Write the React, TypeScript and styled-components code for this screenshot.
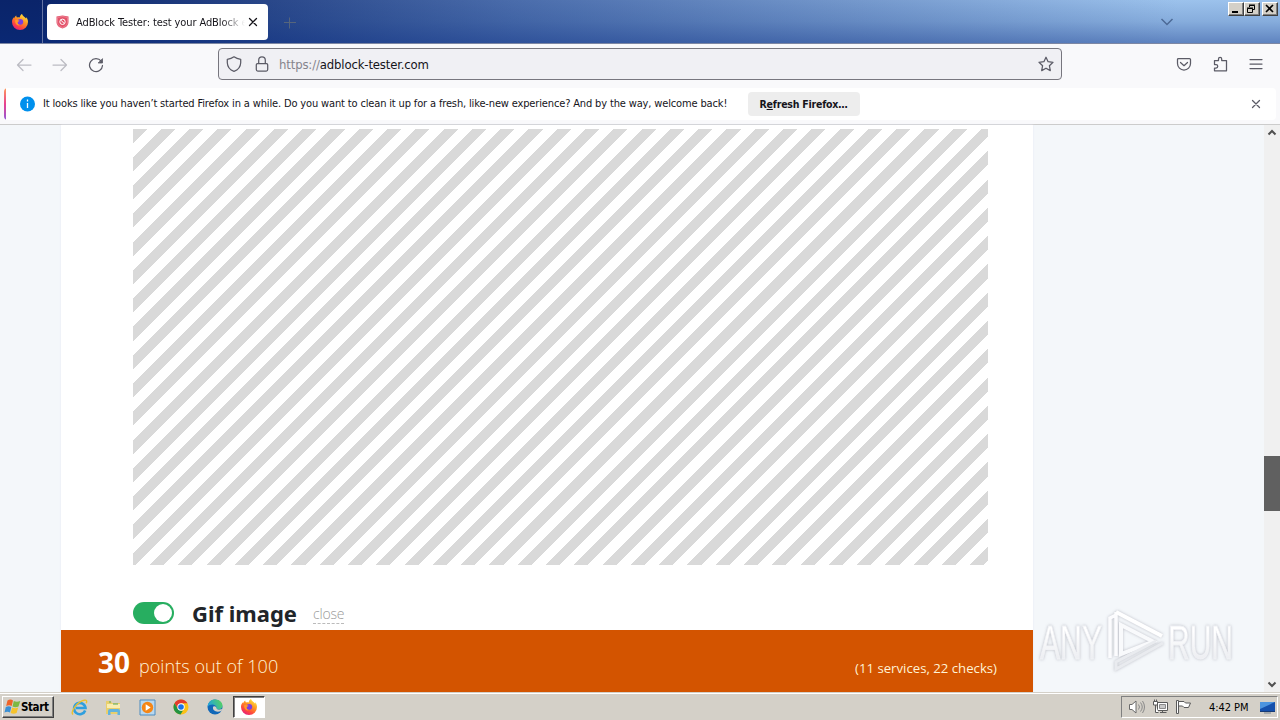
import type { ReactNode } from 'react';
import styled, { createGlobalStyle } from 'styled-components';

const GlobalStyle = createGlobalStyle`
    * {
        box-sizing: border-box;
    }

    body {
        margin: 0;
        overflow: hidden;
        font-family: 'DejaVu Sans Condensed', 'DejaVu Sans', sans-serif;
        font-size: 11px;
        color: #15141a;
    }

    svg {
        display: block;
        flex: none;
    }
`;

const Desktop = styled.div`
    width: 1280px;
    height: 720px;
    display: flex;
    flex-direction: column;
    overflow: hidden;
`;

/* title bar */

const TitleBar = styled.header`
    height: 44px;
    flex: none;
    display: flex;
    border-bottom: 1px solid #7d87a3;
    background: linear-gradient(
            180deg,
            rgba(10, 50, 130, 0) 0%,
            rgba(10, 50, 130, 0.15) 50%,
            rgba(10, 45, 130, 0.42) 100%
        ),
        linear-gradient(90deg, #0a246a 0%, #0a246a 3%, #4a6cab 40%, #9cc2ec 92%, #9cc2ec 100%);
`;

const FirefoxView = styled.div`
    width: 43px;
    display: flex;
    align-items: center;
    justify-content: center;
    border-right: 1px solid #6474a4;
    padding-right: 3px;
`;

const Tab = styled.div`
    width: 221px;
    height: 36px;
    margin: 4px 0 0 4px;
    padding: 0 8px 0 9px;
    display: flex;
    align-items: center;
    border-radius: 4px;
    background: #fff;
`;

const TabTitle = styled.span`
    width: 169px;
    margin-left: 7px;
    padding-top: 1px;
    white-space: nowrap;
    letter-spacing: -0.1px;
    mask-image: linear-gradient(90deg, #000 145px, transparent 169px);
`;

const NewTab = styled.div`
    margin: 17px 0 0 16px;
`;

const AllTabs = styled.div`
    margin: 15px 54px 0 auto;
`;

const WindowButtons = styled.div`
    display: flex;
    padding: 2px 2px 0 0;
`;

const WindowButton = styled.div<{ $gap?: boolean }>`
    width: 16px;
    height: 14px;
    margin-left: ${({ $gap }) => ($gap ? '2px' : '0')};
    background: #d4d0c8;
    border: 1px solid;
    border-color: #fff #404040 #404040 #fff;
    box-shadow: inset -1px -1px 0 #808080;
`;

/* toolbar */

const NavBar = styled.nav`
    height: 44px;
    flex: none;
    display: flex;
    align-items: center;
    padding: 0 16px;
    background: #f9f9fb;
    color: #5b5b66;
`;

const NavIcons = styled.div`
    display: flex;
    gap: 20px;
    width: 202px;
    padding-bottom: 2px;
`;

const UrlBar = styled.div`
    width: 844px;
    height: 32px;
    margin-top: -4px;
    display: flex;
    align-items: center;
    padding: 0 7px;
    border: 1px solid #77767e;
    border-radius: 4px;
    background: #f0f0f4;
`;

const UrlIcons = styled.div`
    display: flex;
    gap: 12px;
`;

const UrlText = styled.span`
    flex: 1;
    margin-left: 9px;
    font-size: 13px;
    letter-spacing: -0.15px;
    color: #15141a;

    span {
        color: #85848c;
    }
`;

const ToolIcons = styled.div`
    display: flex;
    gap: 20px;
    margin-left: auto;
    padding-bottom: 4px;
`;

/* notification */

const Notification = styled.div`
    height: 37px;
    flex: none;
    padding-left: 4px;
    background: #f9f9fb;
    border-bottom: 1px solid #cccccc;
`;

const NotificationBody = styled.div`
    position: relative;
    width: 1272px;
    height: 32px;
    display: flex;
    align-items: center;
    padding: 0 12px 0 15px;
    border-radius: 4px;
    background: #fff;
    overflow: hidden;

    &::before {
        content: '';
        position: absolute;
        left: 0;
        top: 0;
        bottom: 0;
        width: 2px;
        background: linear-gradient(#ff9a5a, #e8408f 50%, #9059d8);
    }
`;

const Message = styled.span`
    width: 697px;
    margin-left: 8px;
    padding-bottom: 1px;
    white-space: nowrap;
    letter-spacing: -0.147px;
`;

const RefreshButton = styled.div`
    width: 112px;
    height: 24px;
    margin-left: 8px;
    padding-right: 1px;
    line-height: 24px;
    text-align: center;
    font-weight: bold;
    font-size: 10.5px;
    letter-spacing: -0.22px;
    background: #ededed;
    border-radius: 4px;
    white-space: nowrap;
`;

const Dismiss = styled.div`
    margin-left: auto;
`;

/* page */

const Viewport = styled.main`
    flex: 1;
    min-height: 0;
    display: flex;
    background: #f4f7fa;
`;

const Content = styled.div`
    width: 972px;
    margin-left: 61px;
    display: flex;
    flex-direction: column;
    background: #fff;
    box-shadow: 0 0 2px #e6e9f5;
`;

const AdPlaceholder = styled.div`
    width: 855px;
    height: 436px;
    margin: 4px 0 0 72px;
    background: repeating-linear-gradient(135deg, #d9d9d9 0 10px, #fff 10px 20px);
`;

const TestRow = styled.div`
    flex: 1;
    display: flex;
    padding: 32px 0 0 72px;
`;

const Toggle = styled.div`
    width: 41px;
    height: 22px;
    margin-top: 5px;
    padding: 2px;
    display: flex;
    justify-content: flex-end;
    border-radius: 11px;
    background: #27ae60;

    &::after {
        content: '';
        width: 18px;
        height: 18px;
        border-radius: 50%;
        background: #fff;
    }
`;

const TestTitle = styled.h3`
    width: 105px;
    margin: 0 0 0 18px;
    font: bold 22px/32px 'Noto Sans', sans-serif;
    white-space: nowrap;
    color: #212529;
`;

const CloseLink = styled.span`
    height: 19px;
    margin: 8px 0 0 16px;
    font: 300 14px/18px 'Open Sans', sans-serif;
    letter-spacing: -0.2px;
    color: #999;
    border-bottom: 1px dashed #bbb;
`;

const ScoreBar = styled.div`
    height: 62px;
    flex: none;
    display: flex;
    align-items: baseline;
    padding: 11px 36px 0 37px;
    background: #d35400;
    color: #fff3d6;
    font-family: 'Open Sans', sans-serif;
    white-space: nowrap;
`;

const Score = styled.strong`
    width: 41px;
    font: bold 28px/42px 'Noto Sans', sans-serif;
    color: #fff;
`;

const ScoreLabel = styled.span`
    font-size: 18px;
    font-weight: 300;
    letter-spacing: 0.05px;
`;

const ScoreDetail = styled.span`
    margin-left: auto;
    font-size: 13.2px;
`;

const Margin = styled.aside`
    position: relative;
    flex: 1;
`;

const Watermark = styled.svg`
    position: absolute;
    left: 0;
    top: 475px;
    font-family: 'Liberation Sans', sans-serif;
    font-size: 49px;
    filter: drop-shadow(0 0 1.5px rgba(60, 60, 80, 0.3));
`;

const ScrollBar = styled.div`
    width: 16px;
    display: flex;
    flex-direction: column;
    background: #f0f0f0;
`;

const ScrollThumb = styled.div`
    height: 55px;
    margin: 316px 0 auto;
    background: #606060;
`;

/* taskbar */

const TaskBar = styled.footer`
    height: 28px;
    flex: none;
    display: flex;
    align-items: center;
    padding: 1px 2px 0 2px;
    border-top: 1px solid #d4d0c8;
    box-shadow: inset 0 1px 0 #fff;
    background: #d4d0c8;
`;

const StartButton = styled.div`
    width: 52px;
    height: 22px;
    display: flex;
    align-items: center;
    padding-left: 1px;
    border: 1px solid;
    border-color: #fff #404040 #404040 #fff;
    box-shadow: inset -1px -1px 0 #808080;
    font-weight: bold;
    font-size: 11.5px;
    letter-spacing: -0.4px;
    color: #000;
`;

const QuickLaunch = styled.div`
    display: flex;
    margin-left: 8px;
`;

const LaunchItem = styled.div<{ $active?: boolean }>`
    width: ${({ $active }) => ($active ? '32px' : '34px')};
    height: 22px;
    margin-left: ${({ $active }) => ($active ? '1px' : '0')};
    display: flex;
    align-items: center;
    justify-content: center;
    border: 1px solid;
    border-color: ${({ $active }) =>
        $active ? '#404040 #fff #fff #404040' : 'transparent'};
    background: ${({ $active }) => ($active ? '#fff' : 'none')};
    box-shadow: ${({ $active }) =>
        $active ? 'inset 1px 1px 0 #808080' : 'none'};
`;

const Tray = styled.div`
    width: 157px;
    height: 22px;
    margin-left: auto;
    display: flex;
    align-items: center;
    padding-left: 6px;
    border: 1px solid;
    border-color: #808080 #fff #fff #808080;
    color: #000;
`;

const TrayIcons = styled.div`
    display: flex;
    gap: 6px;
`;

const Clock = styled.span`
    width: 40px;
    margin: 0 10px 0 17px;
    white-space: nowrap;
    letter-spacing: -0.05px;
`;

type IconProps = { size?: number; color?: string; children: ReactNode };

const Icon = ({ size = 16, color = '#5b5b66', children }: IconProps) => (
    <svg
        width={size}
        height={size}
        viewBox="0 0 16 16"
        fill="none"
        stroke={color}
        strokeWidth="1.25"
        strokeLinecap="round"
        strokeLinejoin="round"
    >
        {children}
    </svg>
);

const FirefoxLogo = () => (
    <svg width="16" height="16" viewBox="0 0 16 16">
        <defs>
            <linearGradient id="fox" x1="0.8" y1="0" x2="0.2" y2="1">
                <stop offset="0" stopColor="#fff044" />
                <stop offset="0.4" stopColor="#ff9421" />
                <stop offset="0.7" stopColor="#ff4b3b" />
                <stop offset="1" stopColor="#e31587" />
            </linearGradient>
        </defs>
        <path
            fill="url(#fox)"
            d="M10 0c.3 2 3.200 3 4 4.600.5-.2.300-1.100.2-1.600C15.500 4.500 16 6.300 16 8a8 8 0 0 1-16 0c0-2 .8-3.600 1.800-4.700L2 4.500C2.500 3 3.400 2 4.200 1.500c0 .8.300 1.500.8 2C6 3.300 7 3.300 7.800 3.600 7.700 2 8.800.6 10 0z"
        />
        <circle cx="8.300" cy="7.800" r="2.900" fill="#7a3fe0" />
        <path fill="#ff9a2a" d="M3 6.500c1.500-.8 3-.6 4.500.3C7 7.600 6 7.600 5.600 8.300c-.3 1.500.9 2.500 2.400 2.700-2.500 1.500-5-.8-5-4.500z" />
    </svg>
);

const AdBlockIcon = () => (
    <svg width="13" height="14" viewBox="0 0 13 14">
        <path fill="#e4526a" d="M6.500.5 12.500 1.500v5.500c0 3.500-2.500 5.500-6 6.500C3 12.500.500 10.500.500 7V1.500z" />
        <path d="M6.500 1.500 11.500 2.500v4.500c0 3-2 4.500-5 5.500-3-1-5-2.500-5-5.500V2.500z" fill="none" stroke="#f09aa8" strokeWidth=".6" />
        <circle cx="6.500" cy="6.800" r="2.700" fill="none" stroke="#fff" strokeWidth="1" />
        <path d="m4.700 5 3.600 3.600" stroke="#fff" />
    </svg>
);

const ExplorerIcon = () => (
    <svg width="17" height="17" viewBox="0 0 17 17" fill="none">
        <path d="M14.200 11.500A5.700 5.700 0 1 1 14.500 9H5" stroke="#2f9fde" strokeWidth="2.600" />
        <path d="M2 15.500C-1 13 6 3 13 1.300c3-.8 3 1.200 2.200 3" stroke="#ecc02c" strokeWidth="1.400" />
    </svg>
);

const FolderIcon = () => (
    <svg width="17" height="17" viewBox="0 0 17 17">
        <path d="M1 2h5l1 2h8v11H1z" fill="#e9cf6c" />
        <path d="M2 5h13v4H2z" fill="#f9edb0" />
        <path d="M3 16v-4q0-2 2-2h8q2 0 2 2v4h-2.500v-3h-7v3z" fill="#62b3dd" />
        <path d="M4 3h2M8 5h5" stroke="#54a864" />
    </svg>
);

const MediaIcon = () => (
    <svg width="17" height="17" viewBox="0 0 17 17">
        <path d="M1 1h15v15H1z" fill="#b9d8ef" stroke="#4d8cc0" />
        <circle cx="8.500" cy="8.500" r="5.700" fill="#f58616" />
        <path d="m6.700 5.300 5 3.200-5 3.200z" fill="#fff" />
    </svg>
);

const ChromeIcon = () => (
    <svg width="16" height="16" viewBox="0 0 16 16">
        <circle cx="8" cy="8" r="7.500" fill="#fbc116" />
        <path d="M1.500 4.200A7.500 7.500 0 0 1 14.500 4.300H8L4.800 9.800z" fill="#e33b2e" />
        <path d="M1.500 4.200 4.800 9.800 8 11.500h2L7.500 15.500A7.500 7.500 0 0 1 1.500 4.200z" fill="#229342" />
        <circle cx="8" cy="8" r="3.700" fill="#fff" />
        <circle cx="8" cy="8" r="2.800" fill="#1a73e8" />
    </svg>
);

const EdgeIcon = () => (
    <svg width="16" height="16" viewBox="0 0 16 16">
        <defs>
            <linearGradient id="edge" x1="0" y1="0.500" x2="1" y2="0.200">
                <stop offset="0" stopColor="#1fa2e0" />
                <stop offset="1" stopColor="#57d35d" />
            </linearGradient>
        </defs>
        <circle cx="8" cy="8" r="7.500" fill="#1268b8" />
        <path d="M.5 8C1 3 4 .5 8 .5c4.500 0 7.500 3 7.500 6.300 0 2.700-2.500 4-5 3.700-1.500-.2-1.500-1-1-1.700C9.700 5.500 3.500 4 .5 8z" fill="url(#edge)" />
        <path d="M6 8.300c-.5 3 3 5.700 8.300 3.700l1.700-2-2 .3c-2 .8-4.500.3-4.500-1 0-2-3-3-3.500-1z" fill="#d4d0c8" />
    </svg>
);

const StartFlag = () => (
    <svg width="17" height="16" viewBox="0 0 17 16">
        <path d="M3.500 1.500q3-1.800 5.500 0L7.700 7q-2.500-1.500-5.500 0z" fill="#ef6327" />
        <path d="M9.800 2q3 1.500 6.500 0L14.500 7.500q-3 1.500-6 0z" fill="#7db843" />
        <path d="M1.800 8q3-1.500 5.500 0l-1.300 5.500q-2.500-1.500-5.500 0z" fill="#3a8fd4" />
        <path d="M8.200 8.500q3 1.500 6 0l-1.600 5.500q-3 1.500-6 0z" fill="#f6c32c" />
    </svg>
);

const VolumeIcon = () => (
    <svg width="18" height="16" viewBox="0 0 18 16" fill="none" stroke="#6a6a6a">
        <path d="M1.500 5.500h2.500l4-3.500v12l-4-3.500H1.500z" fill="#fff" />
        <path d="M10.500 5.500q2 2.500 0 5M12.500 3.500q3.500 4.500 0 9M14.500 2q4 6 0 12" stroke="#8a8a8a" />
    </svg>
);

const NetworkIcon = () => (
    <svg width="17" height="16" viewBox="0 0 17 16" fill="#fff" stroke="#5a5a5a">
        <path d="M5.500 3.500h10v8h-10zM8 13.500h6.500M10.500 11.500v2" />
        <path d="M7.500 5.500h6v4h-6z" fill="#c8c8c8" stroke="#8a8a8a" />
        <path d="M1.500 2.500h4v3.500h-4zM2.500.5v2M4.500.5v2M3.500 6v7.500h3" />
    </svg>
);

const FlagIcon = () => (
    <svg width="17" height="16" viewBox="0 0 17 16" fill="#fff" stroke="#5a5a5a">
        <path d="M1.500 1.500h2v13h-2z" />
        <path d="M3.500 2.500h5.500l1.500 1.500h5l-2 4.500H9L7.500 7h-4z" />
    </svg>
);

const DesktopIcon = () => (
    <svg width="17" height="16" viewBox="0 0 17 16">
        <path d="M1 3h15v10H1z" fill="#1550ac" />
        <path d="M1 3h15L1 10z" fill="#4c94df" />
        <path d="M1 12.500h15" stroke="#173b75" />
        <path d="M5 14h7" stroke="#78838f" />
    </svg>
);

const launchers = [
    { name: 'ie', icon: <ExplorerIcon /> },
    { name: 'files', icon: <FolderIcon /> },
    { name: 'media', icon: <MediaIcon /> },
    { name: 'chrome', icon: <ChromeIcon /> },
    { name: 'edge', icon: <EdgeIcon /> },
    { name: 'firefox', icon: <FirefoxLogo />, active: true },
];

const Chevron = ({ up }: { up?: boolean }) => (
    <svg width="16" height="15" viewBox="0 0 16 15" fill="none" stroke="#505050" strokeWidth="2">
        <path d={up ? 'm4.500 9.500 3.500-3.500 3.500 3.500' : 'm4.500 5.500 3.500 3.500 3.500-3.500'} />
    </svg>
);

const AnyRun = () => (
    <Watermark width="230" height="80" viewBox="0 0 230 80">
        <defs>
            <linearGradient id="mark" x1="0" y1="0" x2="0" y2="1">
                <stop offset="0.3" stopColor="#ffffff" />
                <stop offset="1" stopColor="#e6e8ed" />
            </linearGradient>
        </defs>
        <g fill="url(#mark)" stroke="#f1f2f6" strokeWidth="0.8">
            <text x="7" y="59" textLength="62" lengthAdjust="spacingAndGlyphs">
                ANY
            </text>
            <text x="135" y="59" textLength="65" lengthAdjust="spacingAndGlyphs">
                RUN
            </text>
        </g>
        <g fill="none" strokeWidth="4">
            <path d="M88 54V25l32 16.500z" stroke="#f9fafc" />
            <path d="M83 12v44M77 58V18l6-3" stroke="#fcfcfe" strokeWidth="3.500" />
            <path d="m83 12 46 24" stroke="#fff" />
            <path d="m130 43-47 26v-7l40-21" stroke="#e9ebef" strokeWidth="3" />
        </g>
    </Watermark>
);

const App = () => {
    return (
        <Desktop>
            <GlobalStyle />
            <TitleBar>
                <FirefoxView>
                    <FirefoxLogo />
                </FirefoxView>
                <Tab>
                    <AdBlockIcon />
                    <TabTitle>AdBlock Tester: test your AdBlock e</TabTitle>
                    <Icon color="#15141a">
                        <path d="m4.500 4.500 7 7M11.500 4.500l-7 7" />
                    </Icon>
                </Tab>
                <NewTab>
                    <svg width="12" height="12" viewBox="0 0 12 12" stroke="#56657c">
                        <path d="M5.500 .5v11M0 5.500h12" />
                    </svg>
                </NewTab>
                <AllTabs>
                    <svg width="14" height="14" viewBox="0 0 14 14" fill="none" stroke="#4d6a96" strokeWidth="1.500">
                        <path d="m1.500 4 5.500 5.500L12.500 4" />
                    </svg>
                </AllTabs>
                <WindowButtons>
                    <WindowButton>
                        <svg width="14" height="12" viewBox="0 0 14 12">
                            <path d="M3 8h6v2H3z" />
                        </svg>
                    </WindowButton>
                    <WindowButton>
                        <svg width="14" height="12" viewBox="0 0 14 12" fill="none" stroke="#000">
                            <path d="M4.500 4V2.500h5v4H8M4 2h6M2.500 5.500h5v4h-5zM2 5h6" />
                        </svg>
                    </WindowButton>
                    <WindowButton $gap>
                        <svg width="14" height="12" viewBox="0 0 14 12" stroke="#000" strokeWidth="1.600">
                            <path d="m3 2 7 7M10 2 3 9" />
                        </svg>
                    </WindowButton>
                </WindowButtons>
            </TitleBar>

            <NavBar>
                <NavIcons>
                    <Icon color="#bcbcc3">
                        <path d="M15 8H1.500M7 2.500 1.500 8 7 13.500" />
                    </Icon>
                    <Icon color="#bcbcc3">
                        <path d="M1 8h13.500M9 2.500 14.500 8 9 13.500" />
                    </Icon>
                    <Icon>
                        <path d="M13.200 4.200A6.500 6.500 0 1 0 14.500 8.500" />
                        <path d="M14.500 2v4h-4z" fill="#5b5b66" strokeWidth=".8" />
                    </Icon>
                </NavIcons>
                <UrlBar>
                    <UrlIcons>
                        <Icon>
                            <path d="M8 .8C6 2.300 4 3 1.300 3.300v3.500C1.500 11 4 14 8 15.300c4-1.300 6.500-4.300 6.700-8.500V3.300C12 3 10 2.300 8 .8z" />
                        </Icon>
                        <Icon>
                            <path d="M3.500 7.500h9a1.200 1.200 0 0 1 1.200 1.200v4.800a1.500 1.500 0 0 1-1.500 1.500H3.800a1.500 1.500 0 0 1-1.500-1.500V8.700a1.200 1.200 0 0 1 1.200-1.200zM4.700 7.500V4.200a3.300 3.300 0 0 1 6.600 0v3.300" />
                        </Icon>
                    </UrlIcons>
                    <UrlText>
                        <span>https://</span>adblock-tester.com
                    </UrlText>
                    <Icon>
                        <path d="m8 1.200 2.100 4.500 4.900.6-3.600 3.400.9 4.900L8 12.200l-4.300 2.400.9-4.900L1 6.300l4.900-.6z" />
                    </Icon>
                </UrlBar>
                <ToolIcons>
                    <Icon>
                        <path d="M2.500 2.500h11a1 1 0 0 1 1 1v4a6.500 6.500 0 0 1-13 0v-4a1 1 0 0 1 1-1zM4.500 6.500 8 9.700l3.500-3.200" />
                    </Icon>
                    <Icon>
                        <path d="M2.500 7V4.500H6.500V3a1.600 1.600 0 0 1 3.200 0v1.500h4.800v10.300h-12V12H4a1.700 1.700 0 0 0 0-3.500H2.500z" />
                    </Icon>
                    <Icon>
                        <path d="M2 3.500h12M2 8h12M2 12.500h12" />
                    </Icon>
                </ToolIcons>
            </NavBar>

            <Notification>
                <NotificationBody>
                    <svg width="16" height="16" viewBox="0 0 16 16">
                        <circle cx="8.500" cy="8" r="7.500" fill="#0090ed" />
                        <path d="M8.500 3.500v2M8.500 7v5" stroke="#fff" strokeWidth="1.300" />
                    </svg>
                    <Message>
                        It looks like you haven’t started Firefox in a while. Do you want to clean
                        it up for a fresh, like-new experience? And by the way, welcome back!
                    </Message>
                    <RefreshButton>
                        R<u>e</u>fresh Firefox…
                    </RefreshButton>
                    <Dismiss>
                        <Icon>
                            <path d="m4.500 4.500 7 7M11.500 4.500l-7 7" />
                        </Icon>
                    </Dismiss>
                </NotificationBody>
            </Notification>

            <Viewport>
                <Content>
                    <AdPlaceholder />
                    <TestRow>
                        <Toggle />
                        <TestTitle>Gif image</TestTitle>
                        <CloseLink>close</CloseLink>
                    </TestRow>
                    <ScoreBar>
                        <Score>30</Score>
                        <ScoreLabel>points out of 100</ScoreLabel>
                        <ScoreDetail>(11 services, 22 checks)</ScoreDetail>
                    </ScoreBar>
                </Content>
                <Margin>
                    <AnyRun />
                </Margin>
                <ScrollBar>
                    <Chevron up />
                    <ScrollThumb />
                    <Chevron />
                </ScrollBar>
            </Viewport>

            <TaskBar>
                <StartButton>
                    <StartFlag />
                    Start
                </StartButton>
                <QuickLaunch>
                    {launchers.map(({ name, icon, active }) => (
                        <LaunchItem key={name} $active={active}>
                            {icon}
                        </LaunchItem>
                    ))}
                </QuickLaunch>
                <Tray>
                    <TrayIcons>
                        <VolumeIcon />
                        <NetworkIcon />
                        <FlagIcon />
                    </TrayIcons>
                    <Clock>4:42 PM</Clock>
                    <DesktopIcon />
                </Tray>
            </TaskBar>
        </Desktop>
    );
};

export default App;
